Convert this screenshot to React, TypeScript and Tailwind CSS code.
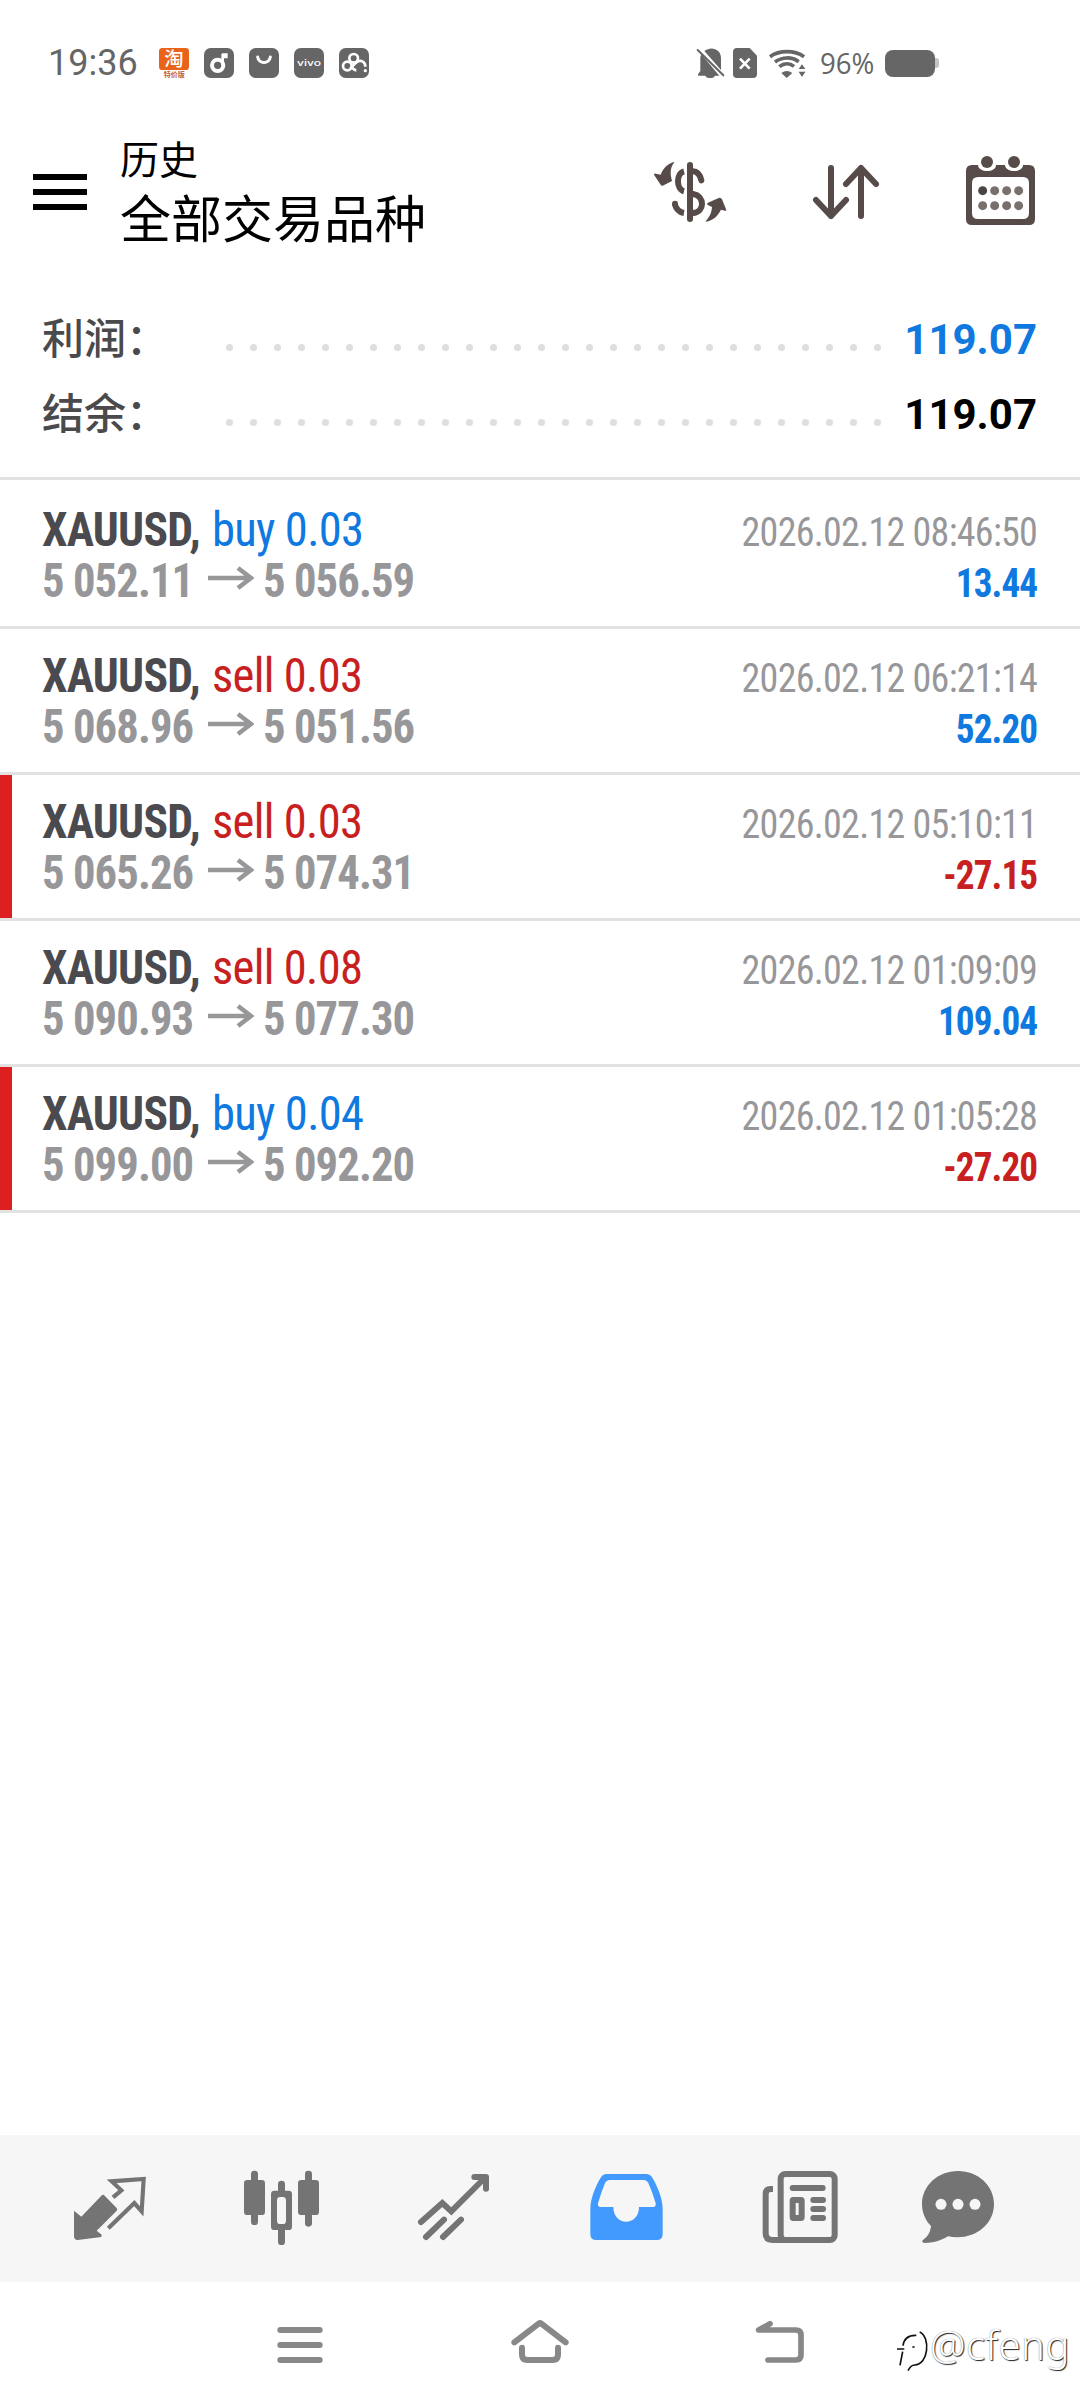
import type { ReactNode } from 'react';

type Trade = {
  side: 'buy' | 'sell';
  volume: string;
  open: string;
  close: string;
  time: string;
  profit: string;
};

const trades: Trade[] = [
  { side: 'buy', volume: '0.03', open: '5 052.11', close: '5 056.59', time: '2026.02.12 08:46:50', profit: '13.44' },
  { side: 'sell', volume: '0.03', open: '5 068.96', close: '5 051.56', time: '2026.02.12 06:21:14', profit: '52.20' },
  { side: 'sell', volume: '0.03', open: '5 065.26', close: '5 074.31', time: '2026.02.12 05:10:11', profit: '-27.15' },
  { side: 'sell', volume: '0.08', open: '5 090.93', close: '5 077.30', time: '2026.02.12 01:09:09', profit: '109.04' },
  { side: 'buy', volume: '0.04', open: '5 099.00', close: '5 092.20', time: '2026.02.12 01:05:28', profit: '-27.20' },
];

function AppBadge({ children }: { children?: ReactNode }) {
  return (
    <svg className="h-[30px] w-[30px]" viewBox="0 0 90 90">
      <rect width="90" height="90" rx="20" fill="#666" />
      {children}
    </svg>
  );
}

function StatusBar() {
  return (
    <div className="flex h-[126px] items-center pl-[48px] text-[#666]">
      <span className="w-[111px] text-[36px] leading-none">19:36</span>
      <div className="flex gap-[15px]">
        <svg className="h-[30px] w-[30px] overflow-visible" viewBox="0 0 90 90">
          <rect width="90" height="66" rx="10" fill="#e9641a" />
          <text x="45" y="54" fontSize="58" fontWeight="500" textAnchor="middle" fill="#fff" fontFamily="Noto Sans CJK SC, sans-serif">淘</text>
          <text x="46" y="87" fontSize="21" fontWeight="700" textAnchor="middle" fill="#c4622c" fontFamily="Noto Sans CJK SC, sans-serif">特价版</text>
        </svg>
        <AppBadge>
          <circle cx="41" cy="52" r="17" fill="none" stroke="#fff" strokeWidth="12" />
          <path d="M52 52V20q0-4 5-4h14v15H60v21z" fill="#fff" />
        </AppBadge>
        <AppBadge>
          <path d="M26 27c3 22 35 22 38 0" fill="none" stroke="#fff" strokeWidth="9" strokeLinecap="round" />
        </AppBadge>
        <AppBadge>
          <text x="45" y="55" fontSize="27" fontWeight="500" textAnchor="middle" textLength="72" lengthAdjust="spacingAndGlyphs" fill="#fff" fontFamily="Inter, sans-serif">vivo</text>
        </AppBadge>
        <AppBadge>
          <circle cx="44" cy="31" r="13" fill="none" stroke="#fff" strokeWidth="8" />
          <circle cx="25" cy="54" r="13" fill="none" stroke="#fff" strokeWidth="8" />
          <path d="M34 61L52 43c12-9 27-3 27 13M52 67c-7 0-9-3-14-9" fill="none" stroke="#fff" strokeWidth="8" />
          <circle cx="79" cy="68" r="5" fill="#fff" />
        </AppBadge>
      </div>
      <svg className="ml-[325px] h-[30px] w-[136px]" viewBox="42 54 408 90">
        <path d="M64 73L118 137H105c-4 10-25 10-29 0H56q-4 0-1-6l6-8V82zM73 63c20-16 50-6 50 21v36z" fill="#666" />
        <path d="M53 60L130 136" stroke="#666" strokeWidth="6" strokeLinecap="round" />
        <path d="M171 54h38l22 23v55q0 12-12 12h-48q-12 0-12-12V66q0-12 12-12z" fill="#666" />
        <path d="M180 86l29 30M209 86l-29 30" stroke="#fff" strokeWidth="8" />
        <path d="M270 80c28-20 74-20 102 0M285 96c21-16 51-16 71-1M298 110c14-11 31-11 44-1" fill="none" stroke="#666" strokeWidth="11" />
        <path d="M320 144l-16-15q16-12 33 0zM366 103l10 14h-20zM366 141l10-16h-20z" fill="#666" />
      </svg>
      <span className="-ml-[10px] w-[65px] origin-left scale-x-[0.92] whitespace-nowrap font-['Open_Sans',sans-serif] text-[30px] leading-none">96%</span>
      <div className="flex items-center">
        <div className="h-[27px] w-[50px] rounded-[8px] bg-[#666]" />
        <div className="h-[10px] w-[4px] rounded-r-[3px] bg-[#c4c4c4]" />
      </div>
    </div>
  );
}

function Header() {
  return (
    <header className="flex h-[132px] items-center">
      <div className="ml-[33px] flex w-[54px] flex-col gap-[9px]">
        <div className="h-[6px] bg-black" />
        <div className="h-[6px] bg-black" />
        <div className="h-[6px] bg-black" />
      </div>
      <div className="ml-[33px] w-[510px] pt-[4px] text-black">
        <div className="text-[39px] leading-[52px]">历史</div>
        <div className="text-[51px] leading-[67px]">全部交易品种</div>
      </div>
      <svg className="h-[132px] w-[150px]" viewBox="0 -42 450 396">
        <g fill="none" stroke="#564b49" strokeWidth="18" strokeLinecap="round">
          <path d="M180 75V237" />
          <path d="M214 121C209 101 198 94 189 94M189 162C225 168 225 216 189 219" />
          <path d="M162 94C138 100 138 148 162 154M134 191C139 210 150 217 162 219" strokeLinecap="butt" />
        </g>
        <circle cx="135" cy="191" r="9" fill="#564b49" />
        <path d="M134 66c-14 16-14 33-8 57l-28 14q-4 1-6-3L72 104q0-4 5-3l15 3c8-20 22-35 42-38z" fill="#564b49" />
        <path d="M226 245c14-16 18-25 20-44l-14-7q-2-3 2-6l32-14q7-2 10 4l13 32q0 3-4 2l-12-3c-10 18-22 33-47 36z" fill="#564b49" />
      </svg>
      <svg className="h-[132px] w-[150px]" viewBox="450 -42 450 396">
        <path d="M603 84V228M558 180l45 48 45-48M693 228V84M648 132l45-48 45 48" fill="none" stroke="#564b49" strokeWidth="18" strokeLinecap="round" strokeLinejoin="round" />
      </svg>
      <svg className="h-[132px] w-[150px]" viewBox="900 -42 450 396">
        <path fillRule="evenodd" d="M1026 75h18c2 24 54 24 54 0h27c2 24 54 24 54 0h18q18 0 18 18v144q0 18-18 18H1026q-18 0-18-18V93q0-18 18-18zM1044 111q-18 0-18 18v90q0 18 18 18h135q18 0 18-18v-90q0-18-18-18z" fill="#564b49" />
        <circle cx="1071" cy="66" r="18" fill="#564b49" />
        <circle cx="1152" cy="66" r="18" fill="#564b49" />
        {[152, 197].map((y) =>
          [1058, 1094, 1130, 1166].map((x) => (
            <circle key={`${x}-${y}`} cx={x} cy={y} r="13.5" fill={x === 1058 && y === 152 ? '#4a4443' : '#79706e'} />
          )),
        )}
      </svg>
    </header>
  );
}

function SummaryRow({ label, value, blue }: { label: string; value: string; blue?: boolean }) {
  return (
    <div className="flex h-[75px] items-center pl-[42px] pr-[43px]">
      <span className="w-[184px] text-[42px] font-medium leading-none text-[#4a4a4d]">{label}</span>
      <div className="mt-[16px] flex w-[655px] justify-between">
        {Array.from({ length: 28 }, (_, i) => (
          <span key={i} className="h-[7px] w-[7px] rounded-full bg-[#dedede]" />
        ))}
      </div>
      <span className={`ml-auto text-[42px] font-bold leading-none ${blue ? 'text-[#0f79e0]' : 'text-black'}`}>{value}</span>
    </div>
  );
}

function TradeRow({ trade }: { trade: Trade }) {
  const loss = trade.profit.startsWith('-');
  return (
    <div className={`flex h-[146px] justify-between border-b-[3px] border-[#e2e2e2] pr-[43px] [font-stretch:75%] ${loss ? 'shadow-[inset_12px_0_0_#dd1f1f]' : ''}`}>
      <div className="pl-[42px] pt-[21px] text-[48px] leading-[51px]">
        <div className="flex whitespace-nowrap">
          <span className="w-[170px] origin-left scale-x-[0.95] font-bold tracking-[-0.8px] text-[#4a4a4f]">XAUUSD,</span>
          <span className={`origin-left scale-x-[0.97] tracking-[-0.7px] ${trade.side === 'buy' ? 'text-[#0f79e0]' : 'text-[#c8201f]'}`}>
            {trade.side} {trade.volume}
          </span>
        </div>
        <div className="flex items-center whitespace-nowrap font-bold tracking-[-1px] text-[#97979a]">
          <span className="w-[166px] origin-left scale-x-[0.93]">{trade.open}</span>
          <svg className="mb-[5px] h-[24px] w-[46px]" viewBox="0 0 46 24">
            <path d="M0 12H43M30 2l13 10-13 10" fill="none" stroke="#97979a" strokeWidth="4.6" />
          </svg>
          <span className="ml-[9px] origin-left scale-x-[0.93]">{trade.close}</span>
        </div>
      </div>
      <div className="pt-[24px] text-right text-[40px] leading-[51px]">
        <div className="origin-right scale-x-[0.95] tracking-[-0.75px] text-[#97979a]">{trade.time}</div>
        <div className={`origin-right scale-x-[0.93] font-bold tracking-[-1px] ${loss ? 'text-[#c8201f]' : 'text-[#0f79e0]'}`}>{trade.profit}</div>
      </div>
    </div>
  );
}

function TabBar() {
  return (
    <nav className="flex h-[147px] bg-[#f6f6f6] pl-[24px]">
      <svg className="h-[147px] w-[172px]" viewBox="-18 45 516 441">
        <path d="M132 272l22 18 60-63q5-5 10 0l36 37q3 4 0 8l-60 60 15 12-1 7-71 9q-11 0-11-11z" fill="#747474" />
        <path d="M249 232l25-21-29-27 96-7-6 97-22-25-78 76" fill="none" stroke="#747474" strokeWidth="12.5" />
      </svg>
      <svg className="h-[147px] w-[172px]" viewBox="498 45 516 441">
        <g fill="#747474">
          <rect x="663" y="152" width="21" height="163" rx="10" />
          <rect x="642" y="180" width="63" height="105" rx="10" />
          <rect x="744" y="182" width="21" height="193" rx="10" />
          <rect x="723" y="212" width="63" height="118" rx="10" />
          <rect x="825" y="152" width="21" height="168" rx="10" />
          <rect x="804" y="180" width="63" height="105" rx="10" />
        </g>
        <rect x="741" y="231" width="27" height="81" rx="10" fill="#f6f6f6" />
      </svg>
      <svg className="h-[147px] w-[172px]" viewBox="1014 45 516 441">
        <g fill="none" stroke="#747474" strokeWidth="18" strokeLinecap="round">
          <path d="M1173 306l64-57 27 25 97-97" />
          <path d="M1188 351l54-52M1239 351l54-52" />
          <path d="M1333 171h35v35" strokeLinejoin="round" />
        </g>
        <path d="M1350 171h18v22z" fill="#747474" stroke="#747474" strokeWidth="4" />
      </svg>
      <svg className="h-[147px] w-[172px]" viewBox="-30 45 516 441">
        <path d="M170 162H288q13 0 19 11c17 28 31 64 31 94v75q0 18-18 18H139q-18 0-18-18V267c0-30 14-66 31-94q6-11 18-11z" fill="#429aff" />
        <path d="M180 180H280q10 0 15 9 12 26 22 61 2 11-8 11H267c0 59-77 59-77 0H152q-10 0-8-11 10-35 21-61 5-9 15-9z" fill="#f6f6f6" />
      </svg>
      <svg className="h-[147px] w-[172px]" viewBox="486 45 516 441">
        <rect x="692" y="162" width="162" height="198" rx="14" fill="none" stroke="#747474" strokeWidth="18" />
        <path d="M669 207h-7q-15 0-15 15v118q0 20 20 20h40" fill="none" stroke="#747474" strokeWidth="18" />
        <path d="M728 204h90M790 240h29M790 267h29M790 294h29" stroke="#747474" strokeWidth="18" strokeLinecap="round" />
        <rect x="728" y="240" width="27" height="54" rx="2" fill="none" stroke="#747474" strokeWidth="18" strokeLinejoin="round" />
      </svg>
      <svg className="h-[147px] w-[172px]" viewBox="1002 45 516 441">
        <path d="M1224 153c60 0 108 44 108 99 0 66-65 112-138 97-20 13-46 20-70 20q-12-3-5-9c18-13 22-26 24-42-17-17-27-40-27-66 0-55 48-99 108-99z" fill="#747474" />
        {[1173, 1224, 1275].map((x) => (
          <circle key={x} cx={x} cy="253" r="16.5" fill="#f6f6f6" />
        ))}
      </svg>
    </nav>
  );
}

function SystemNav() {
  return (
    <div className="flex h-[126px] pl-[250px]">
      <svg className="h-[126px] w-[100px]" viewBox="0 -24 300 378">
        <path d="M91 120H209M91 165H209M91 210H209" stroke="#888" strokeWidth="18" strokeLinecap="round" />
      </svg>
      <svg className="ml-[140px] h-[126px] w-[100px]" viewBox="720 -24 300 378">
        <path d="M793 157L866 101q4-3 8 0L947 157M816 173v21q0 16 16 16h76q16 0 16-16v-21" fill="none" stroke="#888" strokeWidth="18" strokeLinecap="round" />
      </svg>
      <svg className="ml-[130px] h-[126px] w-[100px]" viewBox="0 -24 300 378">
        <path d="M150 101L116 120H228q15 0 15 15v60q0 15-15 15H144" fill="none" stroke="#888" strokeWidth="17" strokeLinecap="round" strokeLinejoin="round" />
      </svg>
      <svg className="ml-[70px] h-[126px] w-[42px]" viewBox="510 -24 126 378">
        <path d="M540 226l8-41M531 177h22M549 167c3-22 16-32 40-31M577 171h7M599 126c34 15 26 99-15 99-8 0-14 5-20 17" fill="none" stroke="#111" strokeWidth="5" />
      </svg>
      <span className="-ml-[2px] pt-[36px] font-['Noto_Sans',sans-serif] text-[40px] font-light leading-[54px] tracking-[0.5px] text-white [text-shadow:1px_1px_1px_#222,0_0_1px_#777]">@cfeng</span>
    </div>
  );
}

export default function App() {
  return (
    <div className="flex h-[2408px] w-[1080px] flex-col overflow-hidden bg-white font-[Roboto,'Noto_Sans_CJK_SC',sans-serif]">
      <StatusBar />
      <Header />
      <section className="h-[222px] border-b-[3px] border-[#e2e2e2] pt-[44px]">
        <SummaryRow label="利润：" value="119.07" blue />
        <SummaryRow label="结余：" value="119.07" />
      </section>
      <main className="flex-1 pt-[3px]">
        {trades.map((t) => (
          <TradeRow key={t.time} trade={t} />
        ))}
      </main>
      <TabBar />
      <SystemNav />
    </div>
  );
}
